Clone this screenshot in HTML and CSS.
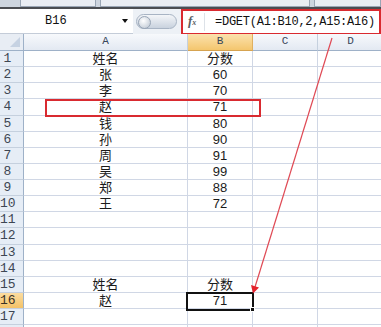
FILE: index.html
```html
<!DOCTYPE html>
<html lang="zh">
<head>
    <meta charset="UTF-8">
    <title>DGET</title>
    <link rel="stylesheet" href="styles.css">
</head>
<body>
    <div class="window">
        <div class="tabs">
            <span class="tab tab-a"></span>
            <span class="tab tab-b"></span>
            <span class="tab tab-c"></span>
        </div>

        <div class="formula-bar">
            <div class="name-box">
                <span class="name">B16</span>
                <span class="name-arrow"></span>
            </div>
            <div class="splitter"><span class="knob"></span></div>
            <div class="formula-box">
                <span class="fx">f<small>x</small></span>
                <span class="formula">=DGET(A1:B10,2,A15:A16)</span>
            </div>
        </div>

        <div class="sheet">
            <div class="corner"></div>
            <div class="col-head">A</div>
            <div class="col-head active">B</div>
            <div class="col-head">C</div>
            <div class="col-head">D</div>

            <div class="row-head">1</div><div class="cell">姓名</div><div class="cell">分数</div><div class="cell"></div><div class="cell"></div>
            <div class="row-head">2</div><div class="cell">张</div><div class="cell">60</div><div class="cell"></div><div class="cell"></div>
            <div class="row-head">3</div><div class="cell">李</div><div class="cell">70</div><div class="cell"></div><div class="cell"></div>
            <div class="row-head">4</div><div class="cell">赵</div><div class="cell">71</div><div class="cell"></div><div class="cell"></div>
            <div class="row-head">5</div><div class="cell">钱</div><div class="cell">80</div><div class="cell"></div><div class="cell"></div>
            <div class="row-head">6</div><div class="cell">孙</div><div class="cell">90</div><div class="cell"></div><div class="cell"></div>
            <div class="row-head">7</div><div class="cell">周</div><div class="cell">91</div><div class="cell"></div><div class="cell"></div>
            <div class="row-head">8</div><div class="cell">吴</div><div class="cell">99</div><div class="cell"></div><div class="cell"></div>
            <div class="row-head">9</div><div class="cell">郑</div><div class="cell">88</div><div class="cell"></div><div class="cell"></div>
            <div class="row-head">10</div><div class="cell">王</div><div class="cell">72</div><div class="cell"></div><div class="cell"></div>
            <div class="row-head">11</div><div class="cell"></div><div class="cell"></div><div class="cell"></div><div class="cell"></div>
            <div class="row-head">12</div><div class="cell"></div><div class="cell"></div><div class="cell"></div><div class="cell"></div>
            <div class="row-head">13</div><div class="cell"></div><div class="cell"></div><div class="cell"></div><div class="cell"></div>
            <div class="row-head">14</div><div class="cell"></div><div class="cell"></div><div class="cell"></div><div class="cell"></div>
            <div class="row-head">15</div><div class="cell">姓名</div><div class="cell">分数</div><div class="cell"></div><div class="cell"></div>
            <div class="row-head active">16</div><div class="cell">赵</div><div class="cell">71</div><div class="cell"></div><div class="cell"></div>
            <div class="row-head">17</div><div class="cell"></div><div class="cell"></div><div class="cell"></div><div class="cell"></div>
            <div class="row-head"></div><div class="cell"></div><div class="cell"></div><div class="cell"></div><div class="cell"></div>
        </div>

        <!-- annotations drawn over the sheet -->
        <div class="mark-row"></div>
        <div class="selection"><span class="handle"></span></div>
        <svg class="arrow" width="381" height="327" viewBox="0 0 381 327">
            <line x1="332" y1="38" x2="255" y2="287" stroke="#e04a55" stroke-width="1.2"/>
            <polygon points="253,293.5 259,287.6 251,285" fill="#e4222c"/>
        </svg>
    </div>
</body>
</html>
```

FILE: styles.css
```css
* {
    margin: 0;
    padding: 0;
    box-sizing: border-box;
}

body {
    width: 381px;
    height: 327px;
    overflow: hidden;
    background: #ffffff;
    font-family: 'Liberation Sans', 'Noto Sans CJK SC', sans-serif;
}

.window {
    position: relative;
    width: 381px;
    height: 327px;
    overflow: hidden;
}

/* ribbon remains at the top */
.tabs {
    height: 9px;
    display: flex;
    gap: 4px;
    padding-left: 20px;
    background: #cdd5df;
    border-bottom: 2px solid #4a4d52;
}

.tab {
    height: 7px;
    background: #e9edf3;
    border: 1px solid #9aa6b5;
    border-top: none;
}

.tab-a { width: 76px; }
.tab-b { width: 210px; }
.tab-c { flex: 1; }

/* formula bar */
.formula-bar {
    height: 25px;
    display: flex;
    align-items: stretch;
    background: #edf1f6;
}

.name-box {
    width: 133px;
    display: flex;
    align-items: center;
    background: #ffffff;
    border-bottom: 1px solid #c4ccd8;
}

.name {
    margin-left: 45px;
    font-family: 'Liberation Mono', monospace;
    font-size: 12px;
    color: #111;
}

.name-arrow {
    margin-left: auto;
    margin-right: 5px;
    width: 0;
    height: 0;
    border-left: 3px solid transparent;
    border-right: 3px solid transparent;
    border-top: 4px solid #111;
}

.splitter {
    width: 48px;
    display: flex;
    align-items: center;
    padding: 0 4px 0 3px;
}

.knob {
    flex: 1;
    height: 15px;
    border-radius: 8px;
    border: 1px solid #a8b4c4;
    background: linear-gradient(#f4f6f9, #c9d2de);
    position: relative;
}

.knob::before {
    content: '';
    position: absolute;
    left: 1px;
    top: 1px;
    width: 11px;
    height: 11px;
    border-radius: 50%;
    background: radial-gradient(circle at 40% 35%, #ffffff, #b8c2cf);
    border: 1px solid #98a5b6;
}

.formula-box {
    flex: 1;
    display: flex;
    align-items: center;
    background: #ffffff;
    border: 2px solid #d92a30;
    margin-bottom: -1px;
}

.fx {
    width: 22px;
    padding-left: 5px;
    font-family: 'Liberation Serif', serif;
    font-style: italic;
    font-weight: bold;
    font-size: 13px;
    color: #5a5f66;
    border-right: 1px solid #dde2e8;
    line-height: 16px;
}

.fx small {
    font-size: 8px;
}

.formula {
    padding-left: 10px;
    font-family: 'Liberation Mono', monospace;
    font-size: 12px;
    letter-spacing: -0.25px;
    color: #111;
    white-space: nowrap;
}

/* grid */
.sheet {
    display: grid;
    grid-template-columns: 24px 164px 65px 65px 66px;
    grid-template-rows: 17px;
    grid-auto-rows: 16.13px;
}

.corner {
    background: #e8edf4;
    border-right: 1px solid #9eb1c8;
    border-bottom: 1px solid #9eb1c8;
    position: relative;
}

.corner::after {
    content: '';
    position: absolute;
    right: 3px;
    bottom: 3px;
    border-left: 10px solid transparent;
    border-bottom: 10px solid #c6d2e2;
}

.col-head {
    background: linear-gradient(#f7f9fc, #e3e9f2);
    border-right: 1px solid #c5d0de;
    border-bottom: 1px solid #9eb1c8;
    font-family: 'Liberation Mono', monospace;
    font-size: 11px;
    color: #38465a;
    text-align: center;
    line-height: 15px;
}

.col-head.active {
    background: linear-gradient(#fbe2ae, #f4c66e);
    border-right-color: #e0b060;
    border-bottom-color: #d6a350;
}

.row-head {
    background: #e6edf6;
    border-right: 1px solid #9eb1c8;
    border-bottom: 1px solid #c5d0de;
    font-family: 'Liberation Mono', monospace;
    font-size: 13px;
    color: #3d4653;
    text-align: center;
    padding-right: 8px;
    line-height: 16px;
    overflow: hidden;
}

.row-head.active {
    background: linear-gradient(#fbdca0, #f4c267);
    color: #3a3226;
}

.cell {
    border-right: 1px solid #d0d7e5;
    border-bottom: 1px solid #d0d7e5;
    font-size: 13px;
    line-height: 15px;
    text-align: center;
    color: #1a1a1a;
    white-space: nowrap;
    overflow: hidden;
}

/* red box around row 4 */
.mark-row {
    position: absolute;
    left: 45px;
    top: 99px;
    width: 216px;
    height: 18px;
    border: 2px solid #d92a30;
}

/* active cell B16 */
.selection {
    position: absolute;
    left: 186px;
    top: 292px;
    width: 68px;
    height: 19px;
    border: 2px solid #111;
}

.handle {
    position: absolute;
    right: -3px;
    bottom: -3px;
    width: 5px;
    height: 5px;
    background: #111;
    border: 1px solid #ffffff;
}

.arrow {
    position: absolute;
    left: 0;
    top: 0;
}
```
